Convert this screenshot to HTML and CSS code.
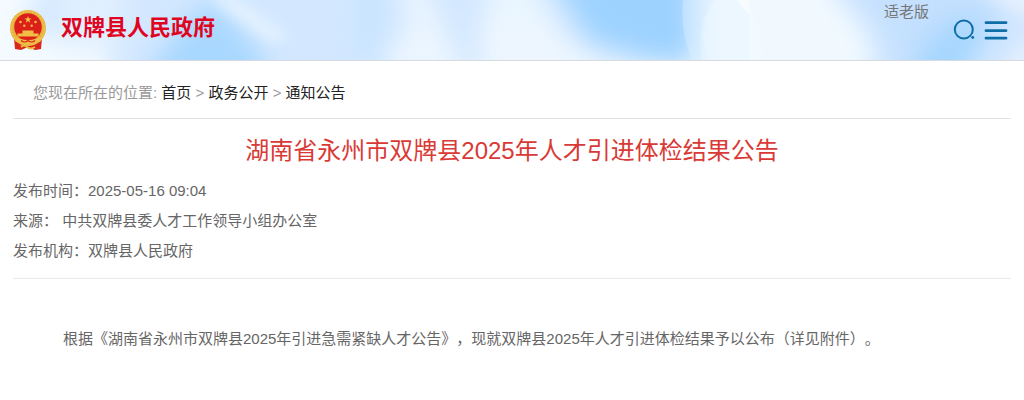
FILE: index.html
```html
<!DOCTYPE html>
<html lang="zh-CN">
<head>
  <meta charset="UTF-8">
  <title>湖南省永州市双牌县2025年人才引进体检结果公告</title>
  <link rel="stylesheet" href="styles.css">
</head>
<body>
  <header class="header">
    <!-- sky background -->
    <svg class="sky" viewBox="0 0 1024 60" preserveAspectRatio="none">
      <defs>
        <filter id="soft" filterUnits="userSpaceOnUse" x="-60" y="-60" width="1144" height="180" color-interpolation-filters="sRGB"><feGaussianBlur stdDeviation="13"/></filter>
        <filter id="mid" filterUnits="userSpaceOnUse" x="-60" y="-60" width="1144" height="180" color-interpolation-filters="sRGB"><feGaussianBlur stdDeviation="7"/></filter>
      </defs>
      <rect width="1024" height="60" fill="#d3e8ff"/>
      <g filter="url(#soft)">
        <path d="M-50-50H60L20 30L110 50V110H-50z" fill="#f4faff"/>
        <path d="M60-50H130L120 50H60z" fill="#e0effe"/>
        <path d="M130 100L185 20L215 0L265 60V110H130z" fill="#a8d7ff"/>
        <path d="M355-40H385V70H360z" fill="#c8e4ff"/>
        <path d="M390-50H410L440 20L460 60V110H385V50L410 25z" fill="#ebf5ff"/>
        <path d="M490-50H515L560 30L550 110H485V20z" fill="#e8f5ff"/>
        <path d="M530-60H710V60H650L590 40z" fill="#9dd2ff"/>
        <path d="M480 20L530 15L600 60L690 70V110H480z" fill="#edf6ff"/>
        <path d="M695-50H800L870 40V110H695z" fill="#f1f9ff"/>
        <path d="M820-50H960L1000 0V30L950 90H900L880 30z" fill="#c4e0fe"/>
        <path d="M920 50L950 20H990L960 90H915z" fill="#a6d6fe"/>
      </g>
      <g filter="url(#mid)">
        <path d="M208-4L232-4L290 38L272 42z" fill="#e6f3ff"/>
        <path d="M975-10H1040V25z" fill="#e3effd"/>
        <path d="M1030 35V80H990z" fill="#e3effd"/>
      </g>
      <path d="M684-5Q678 30 694 65H750V-5z" fill="#d9eeff" opacity=".45"/>
      <path d="M718-5Q692 25 704 65H750V-5z" fill="#eef8ff" opacity=".35"/>
      <path d="M720-5Q690 30 714 65H760Q768 30 740-5z" fill="#fff" opacity=".15"/>
      <path d="M732-5L750 16V-5z" fill="#fffefb" opacity=".6"/>
    </svg>

    <a class="brand" href="#">
      <svg class="emblem" viewBox="0 0 38 42">
        <path d="M5 29L33 29L32 40L26 41L19 38L12 41L6 40z" fill="#d8261c"/>
        <circle cx="19" cy="19" r="18" fill="#e6b540"/>
        <circle cx="19" cy="19" r="16.5" fill="none" stroke="#eec555" stroke-width="1.5" stroke-dasharray="2 1.4"/>
        <circle cx="19" cy="18" r="13.8" fill="#dc1f1b"/>
        <path d="M19 7l.9 2.500h2.700l-2.200 1.600.8 2.600-2.200-1.600-2.200 1.600.8-2.600-2.200-1.600h2.700z" fill="#f3c746"/>
        <g fill="#f0bd45">
          <circle cx="11.500" cy="13" r="1.300"/><circle cx="26.500" cy="13" r="1.300"/>
          <circle cx="15.300" cy="16.700" r="1.200"/><circle cx="22.700" cy="16.700" r="1.200"/>
          <path d="M13.500 21.500h11v3h5v3h-21v-3h5z"/>
          <path d="M4 27q7 4 15 4t15-4l-3 6q-5 0-7 2H14q-2-2-7-2z"/>
        </g>
        <path d="M12 31.500q3.500 3 7 0q3.500 3 7 0" fill="none" stroke="#d8261c" stroke-width="1.200"/>
        <path d="M12 38q3-3 6 0t8 0" fill="none" stroke="#efbd40" stroke-width="2"/>
      </svg>
      <span class="site-name">双牌县人民政府</span>
    </a>

    <div class="tools">
      <a class="elder" href="#">适老版</a>
      <svg class="icon-search" viewBox="0 0 22 22">
        <circle cx="10.800" cy="10.500" r="9" fill="none" stroke="#0f6ea8" stroke-width="2"/>
        <circle cx="19.700" cy="18.500" r="1.400" fill="#0f6ea8"/>
      </svg>
      <svg class="icon-menu" viewBox="0 0 24 20">
        <path d="M2 1.700H22M2 9.700H22M2 17.200H22" stroke="#0f6ea8" stroke-width="2.800" stroke-linecap="round"/>
      </svg>
    </div>
  </header>

  <main class="container">
    <nav class="crumbs">您现在所在的位置: <a href="#">首页</a> &gt; <a href="#">政务公开</a> &gt; <a href="#">通知公告</a></nav>

    <article>
      <h1>湖南省永州市双牌县2025年人才引进体检结果公告</h1>
      <ul class="meta">
        <li>发布时间：2025-05-16 09:04</li>
        <li>来源： 中共双牌县委人才工作领导小组办公室</li>
        <li>发布机构：双牌县人民政府</li>
      </ul>
      <div class="content">
        <p>根据《湖南省永州市双牌县2025年引进急需紧缺人才公告》，现就双牌县2025年人才引进体检结果予以公布（详见附件）。</p>
      </div>
    </article>
  </main>
</body>
</html>
```
FILE: styles.css
```css
* {
  box-sizing: border-box;
  margin: 0;
  padding: 0;
}

body {
  background: #fff;
  color: #666;
  font: 15px/30px "Liberation Sans", "Noto Sans CJK SC", sans-serif;
  text-spacing-trim: space-all;
}

a {
  color: inherit;
  text-decoration: none;
}

.header {
  position: relative;
  display: flex;
  justify-content: space-between;
  height: 61px;
  border-bottom: 1px solid #d5dbe1;
  overflow: hidden;
}

.sky {
  position: absolute;
  top: 0;
  left: 0;
  width: 100%;
  height: 60px;
}

.brand {
  position: relative;
  display: flex;
  padding: 9px 0 0 9px;
}

.emblem {
  width: 38px;
  height: 42px;
}

.site-name {
  margin: 4px 0 0 14px;
  color: #e0051f;
  font-size: 22px;
  font-weight: bold;
}

.tools {
  position: relative;
  display: flex;
  padding-right: 16px;
}

.elder {
  margin-right: 24px;
  color: #777;
  line-height: 24px;
}

.icon-search {
  width: 22px;
  height: 22px;
  margin: 19px 9px 0 0;
}

.icon-menu {
  width: 24px;
  height: 20px;
  margin-top: 21px;
}

.container {
  padding: 0 13px;
}

.crumbs {
  height: 58px;
  padding: 17px 20px 0;
  border-bottom: 1px solid #e3e3e3;
  color: #999;
}

.crumbs a {
  color: #222;
}

h1 {
  padding-top: 12px;
  color: #d93a36;
  font-size: 24px;
  font-weight: normal;
  line-height: 40px;
  text-align: center;
}

.meta {
  height: 108px;
  padding-top: 5px;
  border-bottom: 1px solid #ebebeb;
  list-style: none;
}

.content {
  padding: 45px 0 0;
}

.content p {
  text-indent: 50px;
}
```
